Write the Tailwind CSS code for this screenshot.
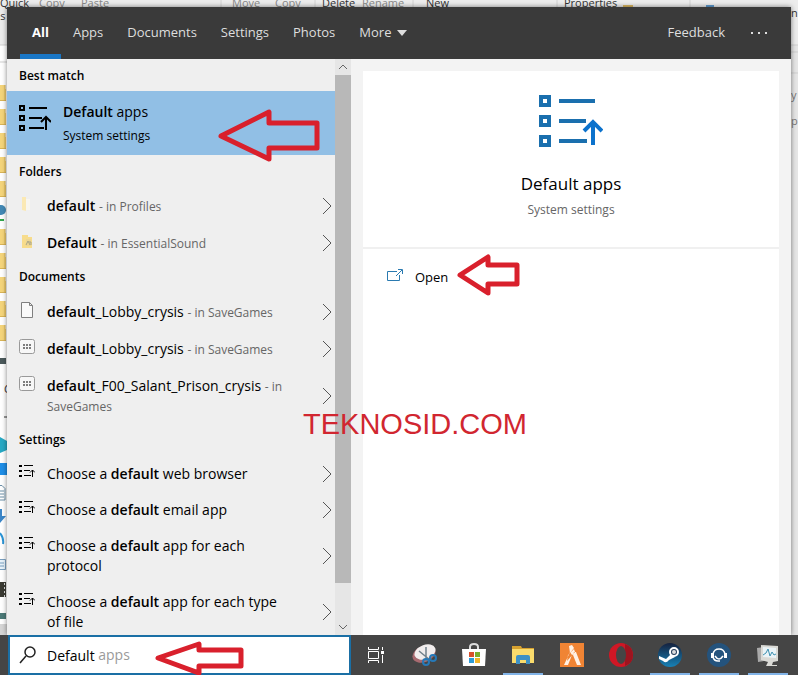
<!DOCTYPE html>
<html lang="en">

<head>
    <meta charset="utf-8">
    <title>Search - Default apps</title>
    <script src="https://cdn.jsdelivr.net/npm/@tailwindcss/browser@4"></script>
</head>

<body class="bg-white" style="font-family: 'Open Sans', 'Noto Sans', sans-serif;">
    <!-- Shared icons -->
    <svg width="0" height="0" class="absolute" aria-hidden="true">
        <symbol id="defaults" viewBox="0 0 64 54">
            <g fill="none" stroke="currentColor">
                <path stroke-width="4" d="M2 3h8v8h-8zM2 23h8v8h-8zM2 43h8v8h-8z" />
                <path stroke-width="4" d="M20 7h36M20 27h27M20 47h28" />
                <path class="text-[#0c72cc]" stroke-width="4" d="M54 51V28M45 37l9-9 9 9" />
            </g>
        </symbol>
        <symbol id="defaults-sm" viewBox="0 0 32 28">
            <g fill="none" stroke="currentColor" stroke-width="2">
                <path d="M1 2h4v4h-4zM1 12h4v4h-4zM1 22h4v4h-4z" />
                <path d="M10 4h18M10 14h13M10 24h15M27 26V14M22 18l5-5 5 5" />
            </g>
        </symbol>
        <symbol id="defaults-xs" viewBox="0 0 16 14">
            <g fill="none" stroke="currentColor">
                <path stroke-width="2" d="M0 2h3M0 7h3M0 12h3" />
                <path stroke-width="1" d="M5 1.5h9M5 6.500h6M5 11.500h7M13.500 13V6M11 8.500l2.500-2.500 2.500 2.500" />
            </g>
        </symbol>
        <symbol id="chevron" viewBox="0 0 10 18">
            <path d="M1 1l8 8-8 8" fill="none" stroke="currentColor" />
        </symbol>
        <symbol id="keys" viewBox="0 0 16 16">
            <rect x=".5" y=".5" width="15" height="14" rx="2" fill="#f7f7f7" stroke="#999" />
            <path d="M4 6h8M4 9h8" stroke="#555" stroke-width="1.500" stroke-dasharray="2 1" />
        </symbol>
        <symbol id="folder-edge" viewBox="0 0 6 16">
            <path d="M0 0h5v4h1v12H0z" fill="#f5d57a" />
            <path d="M5 0v16M0 15.500h6" stroke="#d9b457" fill="none" />
        </symbol>
    </svg>

    <div class="relative flex h-screen flex-col overflow-hidden">
        <!-- Explorer window behind the search panel -->
        <svg class="absolute inset-0 h-full w-full" aria-hidden="true">
            <rect width="100%" height="45" fill="#ededed" />
            <rect x="99%" y="45" width="1%" height="600" fill="#e6e6e6" />
            <path d="M0 45h8M0 62h8M790 45h8M790 52h8M790 73h8" stroke="#cfcfcf" />
            <path d="M221 0v8M315 0v8M413 0v8M557 0v8M690 0v8" stroke="#d2d2d2" />
            <g font-size="11" fill="#333">
                <text x="0" y="7">Quick</text>
                <text x="-6" y="20">es</text>
                <text x="322" y="7">Delete</text>
                <text x="426" y="7">New</text>
                <text x="564" y="7">Properties</text>
                <text x="791" y="17">n</text>
                <text x="791" y="99" fill="#777">y</text>
                <text x="791" y="125" fill="#777">p</text>
                <text x="4" y="393">C</text>
                <g fill="#8a8a8a">
                    <text x="39" y="7">Copy</text>
                    <text x="81" y="7">Paste</text>
                    <text x="232" y="7">Move</text>
                    <text x="275" y="7">Copy</text>
                    <text x="362" y="7">Rename</text>
                </g>
            </g>
            <rect x="623" y="5" width="10" height="3" fill="#dcb862" />
            <rect x="706" y="5" width="8" height="3" fill="#5d9bd0" />
            <g>
                <use href="#folder-edge" y="85" width="6" height="16" />
                <use href="#folder-edge" y="109" width="6" height="16" />
                <use href="#folder-edge" y="133" width="6" height="16" />
                <use href="#folder-edge" y="157" width="6" height="16" />
                <use href="#folder-edge" y="181" width="6" height="16" />
                <use href="#folder-edge" y="229" width="6" height="16" />
                <use href="#folder-edge" y="253" width="6" height="16" />
                <use href="#folder-edge" y="277" width="6" height="16" />
                <use href="#folder-edge" y="301" width="6" height="16" />
                <use href="#folder-edge" y="325" width="6" height="16" />
            </g>
            <circle cx="1" cy="210" r="5" fill="#4389b5" />
            <path d="M0 220h4" stroke="#33a64c" stroke-width="2" />
            <rect y="358" width="6" height="6" fill="#4c5a5c" />
            <path d="M4 417h3" stroke="#333" />
            <path d="M0 437l7 4v9l-7 3z" fill="#27a9c4" />
            <rect y="463" width="7" height="12" fill="#1f8fe8" />
            <path d="M0 485.500h2l3 3V500H0M0 491h4M0 494h4M0 497h4" fill="#fff" stroke="#6b8fa8" />
            <path d="M0 509h2v7h4l-6 7z" fill="#3b86c8" />
            <path d="M0 533q4 5 3 11" fill="none" stroke="#2b95d6" stroke-width="2" />
            <path d="M0 559.500h5.500v10H0M0 563h4M0 566h4" fill="#e8f3fb" stroke="#7aa0c0" />
            <rect y="582" width="6" height="15" fill="#3a3a32" />
            <path d="M4.500 583v14" stroke="#ddd" stroke-dasharray="2 2" />
            <rect y="613" width="6" height="6" fill="#4c7a78" />
            <rect y="624" width="7" height="12" fill="#d6d6d6" />
        </svg>

        <!-- Search panel -->
        <main class="relative mx-[7px] mt-[7px] flex min-h-0 flex-1 flex-col shadow-[0_0_5px_rgba(0,0,0,0.5)]">
            <header class="flex h-[52px] shrink-0 justify-between bg-[#3a3a3a] text-[13px] text-[#dedede]">
                <nav class="flex pl-[13px]">
                    <button class="border-b-[5px] border-[#1976c5] px-3 pt-1 font-bold text-white">All</button>
                    <button class="px-3">Apps</button>
                    <button class="px-3">Documents</button>
                    <button class="px-3">Settings</button>
                    <button class="px-3">Photos</button>
                    <button class="flex items-center gap-[6px] px-3">More
                        <svg width="10" height="6" fill="currentColor"><path d="M0 0h10l-5 6z" /></svg>
                    </button>
                </nav>
                <div class="flex items-center gap-[26px] pr-6">
                    <button>Feedback</button>
                    <button aria-label="Options">
                        <svg width="16" height="2" fill="currentColor"><path d="M0 0h2v2H0zM7 0h2v2H7zM14 0h2v2h-2z" /></svg>
                    </button>
                </div>
            </header>

            <div class="flex min-h-0 flex-1">
                <!-- Results -->
                <section class="w-[328px] shrink-0 overflow-hidden bg-[#efefef] text-sm leading-5 text-black">
                    <h2 class="h-8 px-3 pt-px text-[12px] leading-8 font-semibold">Best match</h2>
                    <a href="#" class="flex h-16 gap-3 bg-[#91bfe5] px-3 pt-[11px]">
                        <svg class="mt-[2px] h-7 w-8 shrink-0"><use href="#defaults-sm" /></svg>
                        <div>
                            <p><span class="font-semibold">Default</span> apps</p>
                            <p class="mt-1 text-[12px] leading-5">System settings</p>
                        </div>
                    </a>

                    <h2 class="h-8 px-3 pt-px text-[12px] leading-8 font-semibold">Folders</h2>
                    <a href="#" class="flex items-center pt-[9px] pr-[3px] pb-2 pl-3">
                        <svg class="mr-3 h-4 w-4 shrink-0 self-start"><path d="M3 1h4v14l-4-1z" fill="#fbe9b4" /><path d="M7 3h4v11H7z" fill="#f8f6ef" /></svg>
                        <p class="flex-1"><b class="font-semibold">default</b> <span class="text-[12px] leading-4 text-[#666]">- in Profiles</span></p>
                        <svg class="h-[18px] w-[10px] text-[#555]"><use href="#chevron" /></svg>
                    </a>
                    <a href="#" class="flex items-center pt-[9px] pr-[3px] pb-2 pl-3">
                        <svg class="mr-3 h-4 w-4 shrink-0 self-start"><path d="M3 2h6v2h4v11H3z" fill="#f7dc8c" /><path d="M7 6h5v7H7z" fill="#ecd694" /><path d="M7 12l2-4 2 4M10 9h2v3" fill="none" stroke="#a9a588" /></svg>
                        <p class="flex-1"><b class="font-semibold">Default</b> <span class="text-[12px] leading-4 text-[#666]">- in EssentialSound</span></p>
                        <svg class="h-[18px] w-[10px] text-[#555]"><use href="#chevron" /></svg>
                    </a>

                    <h2 class="h-8 px-3 text-[12px] leading-8 font-semibold">Documents</h2>
                    <a href="#" class="flex items-center pt-[9px] pr-[3px] pb-2 pl-3">
                        <svg class="mr-3 h-4 w-4 shrink-0 self-start"><path d="M2.500.5h8l3 3v12h-11zM10.500.5v3h3" fill="#fafafa" stroke="#808080" /></svg>
                        <p class="flex-1"><b class="font-semibold">default</b>_Lobby_crysis <span class="text-[12px] leading-4 text-[#666]">- in SaveGames</span></p>
                        <svg class="h-[18px] w-[10px] text-[#555]"><use href="#chevron" /></svg>
                    </a>
                    <a href="#" class="flex items-center pt-[9px] pr-[3px] pb-2 pl-3">
                        <svg class="mr-3 h-4 w-4 shrink-0 self-start"><use href="#keys" /></svg>
                        <p class="flex-1"><b class="font-semibold">default</b>_Lobby_crysis <span class="text-[12px] leading-4 text-[#666]">- in SaveGames</span></p>
                        <svg class="h-[18px] w-[10px] text-[#555]"><use href="#chevron" /></svg>
                    </a>
                    <a href="#" class="flex items-center pt-[9px] pr-[3px] pb-2 pl-3">
                        <svg class="mr-3 h-4 w-4 shrink-0 self-start"><use href="#keys" /></svg>
                        <p class="flex-1"><b class="font-semibold">default</b>_F00_Salant_Prison_crysis <span class="text-[12px] leading-4 text-[#666]">- in<br>SaveGames</span></p>
                        <svg class="h-[18px] w-[10px] text-[#555]"><use href="#chevron" /></svg>
                    </a>

                    <h2 class="h-8 px-3 text-[12px] leading-8 font-semibold">Settings</h2>
                    <a href="#" class="flex items-center py-2 pr-[3px] pl-3">
                        <svg class="mr-3 h-[14px] w-4 shrink-0 self-start"><use href="#defaults-xs" /></svg>
                        <p class="flex-1">Choose a <b class="font-semibold">default</b> web browser</p>
                        <svg class="h-[18px] w-[10px] text-[#555]"><use href="#chevron" /></svg>
                    </a>
                    <a href="#" class="flex items-center py-2 pr-[3px] pl-3">
                        <svg class="mr-3 h-[14px] w-4 shrink-0 self-start"><use href="#defaults-xs" /></svg>
                        <p class="flex-1">Choose a <b class="font-semibold">default</b> email app</p>
                        <svg class="h-[18px] w-[10px] text-[#555]"><use href="#chevron" /></svg>
                    </a>
                    <a href="#" class="flex items-center py-2 pr-[3px] pl-3">
                        <svg class="mr-3 h-[14px] w-4 shrink-0 self-start"><use href="#defaults-xs" /></svg>
                        <p class="flex-1">Choose a <b class="font-semibold">default</b> app for each<br>protocol</p>
                        <svg class="h-[18px] w-[10px] text-[#555]"><use href="#chevron" /></svg>
                    </a>
                    <a href="#" class="flex items-center py-2 pr-[3px] pl-3">
                        <svg class="mr-3 h-[14px] w-4 shrink-0 self-start"><use href="#defaults-xs" /></svg>
                        <p class="flex-1">Choose a <b class="font-semibold">default</b> app for each type<br>of file</p>
                        <svg class="h-[18px] w-[10px] text-[#555]"><use href="#chevron" /></svg>
                    </a>
                </section>

                <!-- Scrollbar -->
                <div class="flex w-4 shrink-0 flex-col items-center bg-[#e6e6e6] text-[#666]">
                    <svg class="h-4 w-4 shrink-0" fill="none" stroke="currentColor"><path d="M4 10l4-4 4 4" /></svg>
                    <div class="w-full flex-14 bg-[#b8b8b8]"></div>
                    <div class="flex-1"></div>
                    <svg class="h-4 w-4 shrink-0" fill="none" stroke="currentColor"><path d="M4 6l4 4 4-4" /></svg>
                </div>

                <!-- Details -->
                <section class="flex-1 bg-[#f3f3f3] px-3 pt-3">
                    <div class="h-full bg-white">
                        <div class="flex h-[178px] flex-col items-center border-b-2 border-[#f0f0f0] pt-[23px]">
                            <svg class="h-[54px] w-16 text-[#1a6fae]"><use href="#defaults" /></svg>
                            <h1 class="mt-6 text-[17px] leading-6">Default apps</h1>
                            <p class="mt-1 text-[12px] leading-5 text-[#666]">System settings</p>
                        </div>
                        <a href="#" class="flex items-start gap-3 px-6 pt-4 text-[13px] leading-6">
                            <svg class="mt-1" width="16" height="14" fill="none" stroke="#2a7ab0"><path d="M10 2.500H.5v9h12V6M9 7l6-6M11 .5h4.500V5" /></svg>
                            Open
                        </a>
                    </div>
                </section>
            </div>
        </main>

        <!-- Taskbar -->
        <footer class="relative flex h-10 shrink-0 bg-[#454545] pl-2">
            <div class="relative flex w-[343px] shrink-0 items-center border-2 border-[#1a6fa5] bg-white pl-[9px]">
                <svg class="h-[18px] w-[18px] shrink-0" fill="none" stroke="#222" stroke-width="1.500"><circle cx="11" cy="6" r="5" /><path d="M7 10l-6 7" /></svg>
                <input id="search" type="text" value="Default" aria-label="Search"
                    class="ml-[10px] h-full w-full text-sm leading-5 outline-none">
                <p class="pointer-events-none absolute left-[37px] text-sm leading-5 text-[#9a9a9a]"><span class="invisible">Default</span> apps</p>
            </div>
            <button aria-label="Task view" class="flex w-[49px] items-center justify-center">
                <svg width="18" height="18" fill="none" stroke="#fff"><path d="M1.500 1v2.500h10V1M1.500 17v-2.500h10V17M1.500 5.500h10v7h-10zM15.500 1v3M15.500 9v8" /><path d="M14 5h3v3h-3z" fill="#fff" stroke="none" /></svg>
            </button>
            <button aria-label="Snip" class="flex w-[49px] items-center justify-center">
                <svg width="26" height="24" fill="none"><ellipse cx="12" cy="11" rx="12" ry="8" fill="#a86a70" transform="rotate(-22 12 11)" /><ellipse cx="13" cy="9" rx="11" ry="7" fill="#f1eded" transform="rotate(-22 13 9)" /><path d="M7 8l11 9M14 4v14" stroke="#71808b" stroke-width="1.500" /><circle cx="14" cy="19" r="3" stroke="#2679b8" stroke-width="2" /><circle cx="21" cy="15" r="3" stroke="#2679b8" stroke-width="2" /></svg>
            </button>
            <button aria-label="Store" class="flex w-[49px] items-center justify-center">
                <svg width="24" height="24"><path d="M8 7V4q0-3 4-3t4 3v3" fill="none" stroke="#ddd" stroke-width="2" /><path d="M0 6h24l-1 17H1z" fill="#fff" /><path d="M7 9h5v5H7z" fill="#d9512c" /><path d="M13 9h5v5h-5z" fill="#7aae2e" /><path d="M7 15h5v5H7z" fill="#2d9bd6" /><path d="M13 15h5v5h-5z" fill="#f2b52b" /></svg>
            </button>
            <button aria-label="File Explorer" class="relative flex w-[49px] items-center justify-center">
                <svg width="22" height="20"><path d="M0 1h9l1 2h12v15H0z" fill="#d6a130" /><path d="M0 4h22v14H0z" fill="#fadb6c" /><path d="M4 19v-7q0-2 2-2h10q2 0 2 2v7h-4v-4H8v4z" fill="#3e91c5" /></svg>
                <span class="absolute bottom-0 h-[2px] w-10 bg-[#82b4e8]"></span>
            </button>
            <button aria-label="FiveM" class="flex w-[49px] items-center justify-center">
                <svg width="24" height="24"><path d="M0 0h24v24H0z" fill="#f08434" /><path d="M9 3l3-1 2 3-4 5zM8 12l6-6 1 3-8 9zM10 9L4 22h4l4-10zM14 9l-1 3 4 10h4L16 9z" fill="#fff1e5" /></svg>
            </button>
            <button aria-label="Opera" class="flex w-[49px] items-center justify-center">
                <svg width="24" height="24"><circle cx="12" cy="12" r="12" fill="#cf1725" /><path d="M16 1q8 3 8 11t-8 11z" fill="#9d141f" /><ellipse cx="12" cy="12" rx="5" ry="9" fill="#454545" /></svg>
            </button>
            <button aria-label="Steam" class="relative flex w-[49px] items-center justify-center">
                <svg width="24" height="24"><defs><linearGradient id="steam" x2="0" y2="1"><stop stop-color="#15213e" /><stop offset="1" stop-color="#1782b7" /></linearGradient></defs><circle cx="12" cy="12" r="12" fill="url(#steam)" /><path d="M1 13l7 3 5-5 4 3-6 3q-3 4-6 1l-4-2z" fill="#fff" /><circle cx="16" cy="9" r="4" fill="#263d5a" stroke="#fff" stroke-width="2" /><circle cx="16" cy="9" r="2" fill="#ddd" /></svg>
                <span class="absolute bottom-0 h-[2px] w-10 bg-[#82b4e8]"></span>
            </button>
            <button aria-label="TeamSpeak" class="relative flex w-[49px] items-center justify-center">
                <svg width="24" height="24" fill="none"><circle cx="12" cy="12" r="12" fill="#24537d" /><path d="M6 12v-1q1-5 6-5t6 5v1M6 14q1 4 5 4h2M8 13q4 6 8 0" stroke="#fff" stroke-width="1.500" /><path d="M4 10h3v5H4zM17 10h3v5h-3z" fill="#fff" /></svg>
                <span class="absolute bottom-0 h-[2px] w-10 bg-[#82b4e8]"></span>
            </button>
            <button aria-label="Monitor" class="relative flex w-[49px] items-center justify-center">
                <svg width="24" height="24"><path d="M1 5l13-2v14L2 19z" fill="#aaa" /><path d="M5 2l17 1v15l-5 1-1 3h5v1H10l2-4-7-2z" fill="#d9d9d5" /><path d="M7 4l13 1v10L7 14z" fill="#eaf3f7" /><path d="M7 12l3-2 2-4 2 7 2-4 2 3 2-1" fill="none" stroke="#3e91b1" /></svg>
                <span class="absolute bottom-0 h-[2px] w-10 bg-[#82b4e8]"></span>
            </button>
        </footer>

        <!-- Annotations -->
        <svg class="pointer-events-none absolute inset-0 h-full w-full" fill="none" stroke="#d9202c" stroke-width="5" stroke-linejoin="round" aria-hidden="true">
            <path d="M221 136l48-24v11h48v25h-48v11z" />
            <path d="M460 275l28-18v8h29v19h-29v9z" />
            <path d="M158 658l41-14v6h42v16h-42v7z" />
        </svg>
        <p class="pointer-events-none absolute top-[408px] left-[303px] text-[29px] leading-8 text-[#d12630]" style="font-family: 'Liberation Sans', Arial, sans-serif;">TEKNOSID.COM</p>
    </div>
</body>

</html>
